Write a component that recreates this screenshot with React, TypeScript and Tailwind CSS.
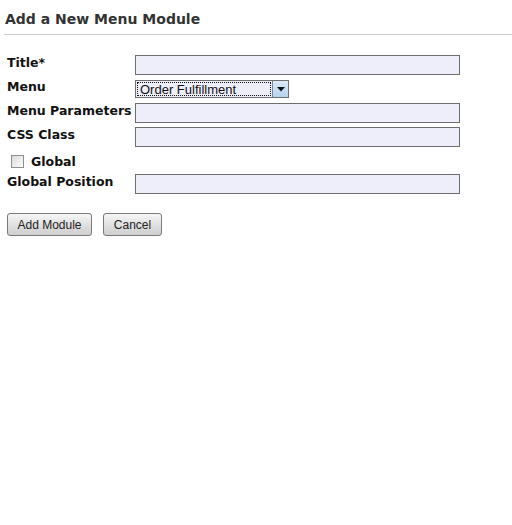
export default function App() {
  return (
    <div className="min-h-screen bg-white font-['DejaVu_Sans',sans-serif] text-[#111]">
      <div className="pl-[4px] pt-[9px]">
        <h1 className="pl-[1px] text-[14px] font-bold leading-[20px] text-[#333]">Add a New Menu Module</h1>
        <div className="mt-[5px] h-px bg-[#cfcfcf]" />
      </div>

      <form className="pl-[7px] pt-[20px]">
        <div className="flex h-[20px] items-center">
          <label className="-mt-[3px] w-[128px] text-[12.5px] font-bold">Title*</label>
          <div className="h-[20px] w-[325px] border border-[#6e6e6e] bg-[#eeeefb]" />
        </div>

        <div className="mt-[5px] flex h-[18px] items-center">
          <label className="-mt-[3px] w-[128px] text-[12.5px] font-bold">Menu</label>
          <div className="flex h-[18px] w-[154px] border border-[#6e6e6e] bg-[#eeeefb]">
            <div className="m-[1px] flex flex-1 items-center border border-dotted border-[#111] bg-[#eeeefb] pl-[2px] font-['Liberation_Sans',sans-serif] text-[13px] leading-none text-[#111]">
              Order Fulfillment
            </div>
            <div className="flex w-[16px] items-center justify-center border-l border-[#7d8a96] bg-gradient-to-b from-[#dbeaf7] to-[#b3d4ee]">
              <svg width="8" height="5" viewBox="0 0 8 5">
                <path d="M0 0h8L4 4.5z" fill="#111" />
              </svg>
            </div>
          </div>
        </div>

        <div className="mt-[5px] flex h-[20px] items-center">
          <label className="-mt-[3px] w-[128px] text-[12.5px] font-bold">Menu Parameters</label>
          <div className="h-[20px] w-[325px] border border-[#6e6e6e] bg-[#eeeefb]" />
        </div>

        <div className="mt-[4px] flex h-[20px] items-center">
          <label className="-mt-[3px] w-[128px] text-[12.5px] font-bold">CSS Class</label>
          <div className="h-[20px] w-[325px] border border-[#6e6e6e] bg-[#eeeefb]" />
        </div>

        <div className="mt-[6px] flex h-[16px] items-center pl-[4px]">
          <span className="h-[13px] w-[13px] border border-[#8f8f8f] bg-gradient-to-br from-[#dcdcdc] to-[#fbfbfb]" />
          <label className="ml-[7px] mt-[2px] text-[12.5px] font-bold">Global</label>
        </div>

        <div className="mt-[5px] flex h-[20px] items-center">
          <label className="-mt-[3px] w-[128px] text-[12.5px] font-bold">Global Position</label>
          <div className="h-[20px] w-[325px] border border-[#6e6e6e] bg-[#eeeefb]" />
        </div>

        <div className="mt-[19px] flex gap-[11px] font-['Liberation_Sans',sans-serif] text-[12px] text-[#222]">
          <button type="button" className="h-[23px] w-[85px] rounded-[3px] border border-[#7a7a7a] bg-gradient-to-b from-[#f6f6f6] to-[#cdcdcd]">
            Add Module
          </button>
          <button type="button" className="h-[23px] w-[59px] rounded-[3px] border border-[#7a7a7a] bg-gradient-to-b from-[#f6f6f6] to-[#cdcdcd]">
            Cancel
          </button>
        </div>
      </form>
    </div>
  );
}
